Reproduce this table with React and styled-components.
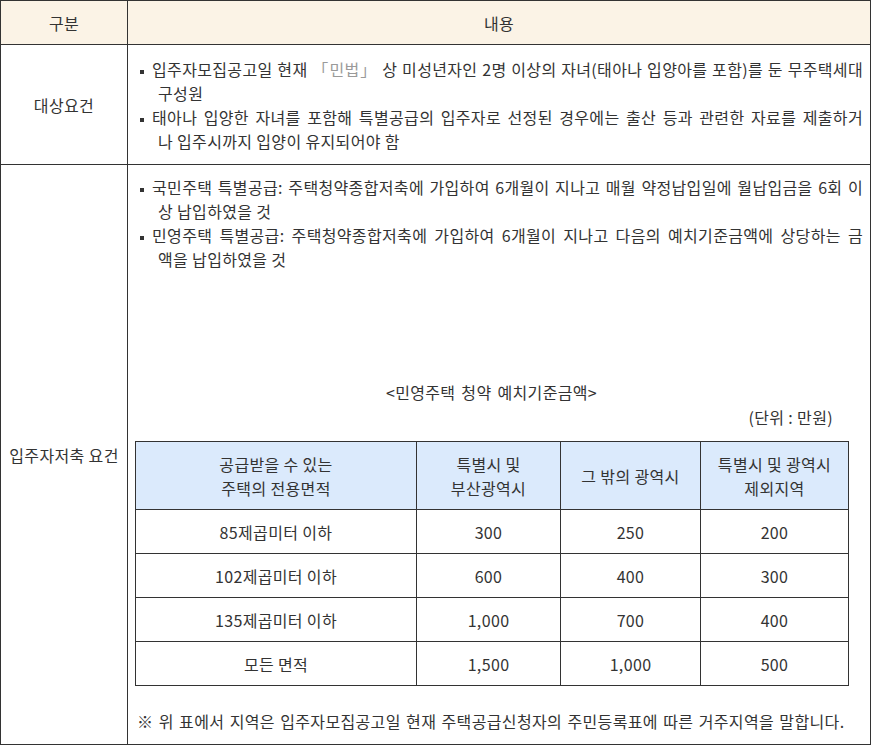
import React from "react";
import styled, { createGlobalStyle } from "styled-components";

const GlobalStyle = createGlobalStyle`
  body {
    margin: 0;
    background: #ffffff;
    font-family: "Noto Sans CJK KR", "Noto Sans", sans-serif;
    font-size: 16px;
    line-height: 24px;
    color: #333333;
    letter-spacing: 0.35px;
  }
`;

const rates = [
  { area: "85제곱미터 이하", seoul: "300", metro: "250", etc: "200" },
  { area: "102제곱미터 이하", seoul: "600", metro: "400", etc: "300" },
  { area: "135제곱미터 이하", seoul: "1,000", metro: "700", etc: "400" },
  { area: "모든 면적", seoul: "1,500", metro: "1,000", etc: "500" },
];

const App = () => {
  return (
    <>
      <GlobalStyle />
      <Board>
        <colgroup>
          <Col $w={127} />
          <Col $w={743} />
        </colgroup>
        <thead>
          <tr>
            <HeadCell>구분</HeadCell>
            <HeadCell>내용</HeadCell>
          </tr>
        </thead>
        <tbody>
          <tr>
            <LabelCell>대상요건</LabelCell>
            <BodyCell $top={12}>
              <Bullets>
                <Bullet>
                  <Line $lead $fill>
                    입주자모집공고일 현재 <Muted>「민법」</Muted> 상 미성년자인 2명 이상의
                    자녀(태아나 입양아를 포함)를 둔 무주택세대
                  </Line>
                  <Line>구성원</Line>
                </Bullet>
                <Bullet>
                  <Line $lead $fill>
                    태아나 입양한 자녀를 포함해 특별공급의 입주자로 선정된 경우에는 출산
                    등과 관련한 자료를 제출하거
                  </Line>
                  <Line>나 입주시까지 입양이 유지되어야 함</Line>
                </Bullet>
              </Bullets>
            </BodyCell>
          </tr>
          <tr>
            <LabelCell>입주자저축 요건</LabelCell>
            <BodyCell $top={10}>
              <Bullets>
                <Bullet>
                  <Line $lead $fill>
                    국민주택 특별공급: 주택청약종합저축에 가입하여 6개월이 지나고 매월
                    약정납입일에 월납입금을 6회 이
                  </Line>
                  <Line>상 납입하였을 것</Line>
                </Bullet>
                <Bullet>
                  <Line $lead $fill>
                    민영주택 특별공급: 주택청약종합저축에 가입하여 6개월이 지나고 다음의
                    예치기준금액에 상당하는 금
                  </Line>
                  <Line>액을 납입하였을 것</Line>
                </Bullet>
              </Bullets>
              <RateBlock>
                <Caption>&lt;민영주택 청약 예치기준금액&gt;</Caption>
                <Unit>(단위 : 만원)</Unit>
                <RateTable>
                  <colgroup>
                    <Col $w={281} />
                    <Col $w={144} />
                    <Col $w={140} />
                    <Col $w={148} />
                  </colgroup>
                  <thead>
                    <tr>
                      <RateHead>
                        공급받을 수 있는
                        <br />
                        주택의 전용면적
                      </RateHead>
                      <RateHead>
                        특별시 및
                        <br />
                        부산광역시
                      </RateHead>
                      <RateHead>그 밖의 광역시</RateHead>
                      <RateHead>
                        특별시 및 광역시
                        <br />
                        제외지역
                      </RateHead>
                    </tr>
                  </thead>
                  <tbody>
                    {rates.map((row) => (
                      <tr key={row.area}>
                        <RateCell>{row.area}</RateCell>
                        <RateCell>{row.seoul}</RateCell>
                        <RateCell>{row.metro}</RateCell>
                        <RateCell>{row.etc}</RateCell>
                      </tr>
                    ))}
                  </tbody>
                </RateTable>
              </RateBlock>
              <Note>
                ※ 위 표에서 지역은 입주자모집공고일 현재 주택공급신청자의 주민등록표에 따른
                거주지역을 말합니다.
              </Note>
            </BodyCell>
          </tr>
        </tbody>
      </Board>
    </>
  );
};

const Board = styled.table`
  border-collapse: collapse;
  table-layout: fixed;
  width: 870px;
  border: 1px solid #333333;
`;

const Col = styled.col`
  width: ${(p) => p.$w}px;
`;

const HeadCell = styled.th`
  height: 43px;
  padding: 0;
  background-color: #fbf3e6;
  border: 1px solid #333333;
  font-weight: 400;
  text-align: center;
  vertical-align: middle;
`;

const LabelCell = styled.td`
  padding: 0 4px;
  border: 1px solid #333333;
  text-align: center;
  vertical-align: middle;
`;

const BodyCell = styled.td`
  padding: ${(p) => p.$top}px 7px 11px;
  border: 1px solid #333333;
  vertical-align: top;
`;

const Bullets = styled.ul`
  list-style: none;
  margin: 0;
  padding: 0;
`;

const Bullet = styled.li`
  padding-left: 23px;
`;

const Line = styled.span`
  display: block;
  white-space: nowrap;
  margin-left: ${(p) => (p.$lead ? "-18px" : "0")};
  text-align: ${(p) => (p.$fill ? "justify" : "left")};
  text-align-last: ${(p) => (p.$fill ? "justify" : "auto")};

  &::before {
    content: "";
    display: ${(p) => (p.$lead ? "inline-block" : "none")};
    width: 4px;
    height: 4px;
    margin-right: 8px;
    background-color: #333333;
    vertical-align: middle;
  }
`;

const Muted = styled.span`
  color: #9a9a9a;
`;

const RateBlock = styled.div`
  width: 713px;
  margin-top: 109px;
`;

const Caption = styled.div`
  text-align: center;
  word-spacing: 2px;
`;

const Unit = styled.div`
  text-align: right;
  padding-right: 15px;
  margin-top: 1px;
`;

const RateTable = styled.table`
  border-collapse: collapse;
  table-layout: fixed;
  width: 713px;
  margin-top: 12px;
  border: 1px solid #333333;
`;

const RateHead = styled.th`
  height: 67px;
  padding: 0 4px;
  background-color: #dbeafc;
  border: 1px solid #333333;
  font-weight: 400;
  text-align: center;
  vertical-align: middle;
`;

const RateCell = styled.td`
  height: 43px;
  padding: 0 4px;
  border: 1px solid #333333;
  text-align: center;
  vertical-align: middle;
`;

const Note = styled.p`
  margin: 23px 0 0;
  padding-left: 2px;
  word-spacing: 1.4px;
`;

export default App;
